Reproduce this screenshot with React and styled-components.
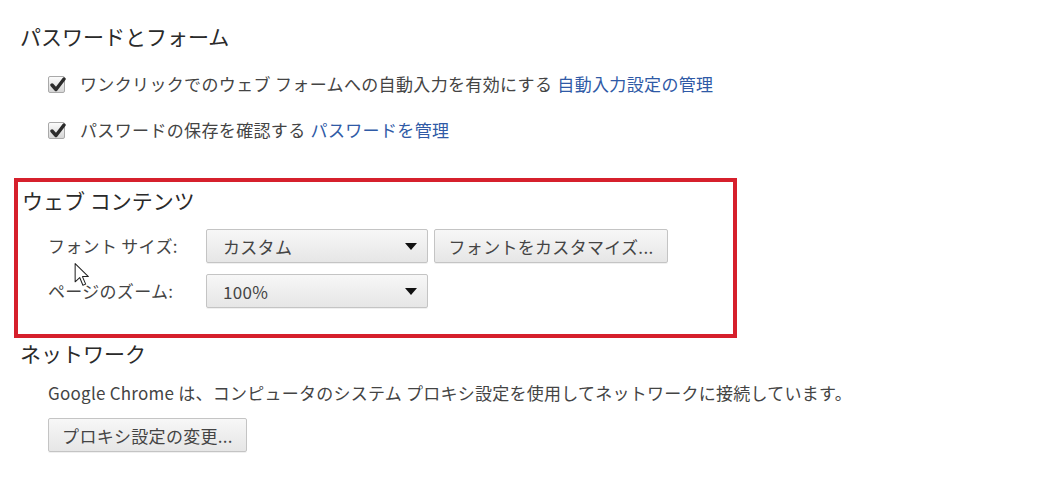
import React from "react";
import styled, { createGlobalStyle } from "styled-components";

const Global = createGlobalStyle`
  html, body { margin: 0; padding: 0; background: #ffffff; }
  body {
    font-family: "Noto Sans CJK JP", "Noto Sans", sans-serif;
    color: #3c3c3c;
  }
`;

const Page = styled.div`
  position: relative;
  width: 1063px;
  height: 480px;
  box-sizing: border-box;
  padding: 22px 0 0 20px;
  display: flex;
  flex-direction: column;
  overflow: hidden;
`;

const Heading = styled.h3`
  margin: ${(p) => p.$mt || 0}px 0 0 0;
  font-size: 21px;
  line-height: 28px;
  font-weight: 400;
  color: #2a2a2a;
`;

const Body = styled.div`
  display: flex;
  flex-direction: column;
  gap: ${(p) => p.$gap || 0}px;
  margin-top: ${(p) => p.$mt || 0}px;
  padding-left: ${(p) => p.$pl ?? 28}px;
`;

const CheckRow = styled.label`
  display: flex;
  align-items: center;
  height: 28px;
  font-size: 17px;
  line-height: 28px;
  letter-spacing: 0.35px;
  color: #444;
`;

const Box = styled.span`
  position: relative;
  width: 17px;
  height: 17px;
  box-sizing: border-box;
  border: 1px solid #a9a9a9;
  border-radius: 2px;
  background: linear-gradient(#fbfbfb, #d6d6d6);
  margin-right: 15px;
  flex: none;
  svg { position: absolute; left: 1px; top: 0px; }
`;

const Link = styled.a`
  color: #2f5aa6;
  text-decoration: none;
  margin-left: 5px;
`;

const Highlight = styled.section`
  margin: 34px 0 0 -6px;
  width: 723px;
  box-sizing: border-box;
  border: 4px solid #d6202c;
  padding: 4px 0 26px 4px;
  display: flex;
  flex-direction: column;
`;

const FormGrid = styled.div`
  display: grid;
  grid-template-columns: 158px auto;
  row-gap: 11px;
  margin: 15px 0 0 26px;
  align-items: center;
`;

const FieldLabel = styled.span`
  font-size: 17px;
  color: #444;
  line-height: 34px;
  letter-spacing: 0.3px;
`;

const Controls = styled.div`
  display: flex;
  gap: 6px;
`;

const Btn = styled.button`
  height: 34px;
  width: ${(p) => p.$w}px;
  box-sizing: border-box;
  border: 1px solid #c4c4c4;
  border-radius: 2px;
  background: linear-gradient(#f7f7f7, #e6e6e6);
  box-shadow: 0 1px 0 rgba(0,0,0,0.06);
  font-family: "Noto Sans CJK JP", "Noto Sans", sans-serif;
  font-size: 17px;
  letter-spacing: 0.3px;
  color: #444;
  padding: 0;
  display: flex;
  align-items: center;
  justify-content: center;
`;

const Select = styled(Btn)`
  justify-content: space-between;
  padding: 0 10px 0 16px;
`;

const Para = styled.p`
  margin: 14px 0 0 0;
  font-size: 17px;
  line-height: 24px;
  letter-spacing: 0.25px;
  color: #444;
`;

const BtnWrap = styled.div`
  margin-top: 13px;
`;

const Cursor = styled.svg`
  position: absolute;
  left: 74px;
  top: 262px;
`;

const Check = () => (
  <svg width="16" height="15" viewBox="0 0 16 15">
    <path d="M2 8 L6 12.5 L14 2" fill="none" stroke="#2b2b2b" strokeWidth="3.4" strokeLinecap="round" strokeLinejoin="round" />
  </svg>
);

const Arrow = () => (
  <svg width="12" height="7" viewBox="0 0 12 7">
    <path d="M0 0 H12 L6 7 Z" fill="#111" />
  </svg>
);

const Checkbox = ({ children }) => (
  <CheckRow>
    <Box><Check /></Box>
    {children}
  </CheckRow>
);

export default function App() {
  return (
    <>
      <Global />
      <Page>
        <Heading>パスワードとフォーム</Heading>
        <Body $mt={20} $gap={18}>
          <Checkbox>
            ワンクリックでのウェブ フォームへの自動入力を有効にする
            <Link href="#">自動入力設定の管理</Link>
          </Checkbox>
          <Checkbox>
            パスワードの保存を確認する
            <Link href="#">パスワードを管理</Link>
          </Checkbox>
        </Body>

        <Highlight>
          <Heading>ウェブ コンテンツ</Heading>
          <FormGrid>
            <FieldLabel>フォント サイズ:</FieldLabel>
            <Controls>
              <Select $w={222}><span>カスタム</span><Arrow /></Select>
              <Btn $w={234}>フォントをカスタマイズ...</Btn>
            </Controls>
            <FieldLabel>ページのズーム:</FieldLabel>
            <Controls>
              <Select $w={222}><span>100%</span><Arrow /></Select>
            </Controls>
          </FormGrid>
        </Highlight>

        <Heading $mt={1}>ネットワーク</Heading>
        <Body $pl={28}>
          <Para>Google Chrome は、コンピュータのシステム プロキシ設定を使用してネットワークに接続しています。</Para>
          <BtnWrap>
            <Btn $w={199}>プロキシ設定の変更...</Btn>
          </BtnWrap>
        </Body>

        <Cursor width="16" height="26" viewBox="0 0 14 22">
          <path d="M1 1 L1 17 L5 13.2 L7.8 20 L10.2 19 L7.4 12.4 L12.6 12.4 Z" fill="#fff" stroke="#222" strokeWidth="0.9" strokeLinejoin="round" />
        </Cursor>
      </Page>
    </>
  );
}
